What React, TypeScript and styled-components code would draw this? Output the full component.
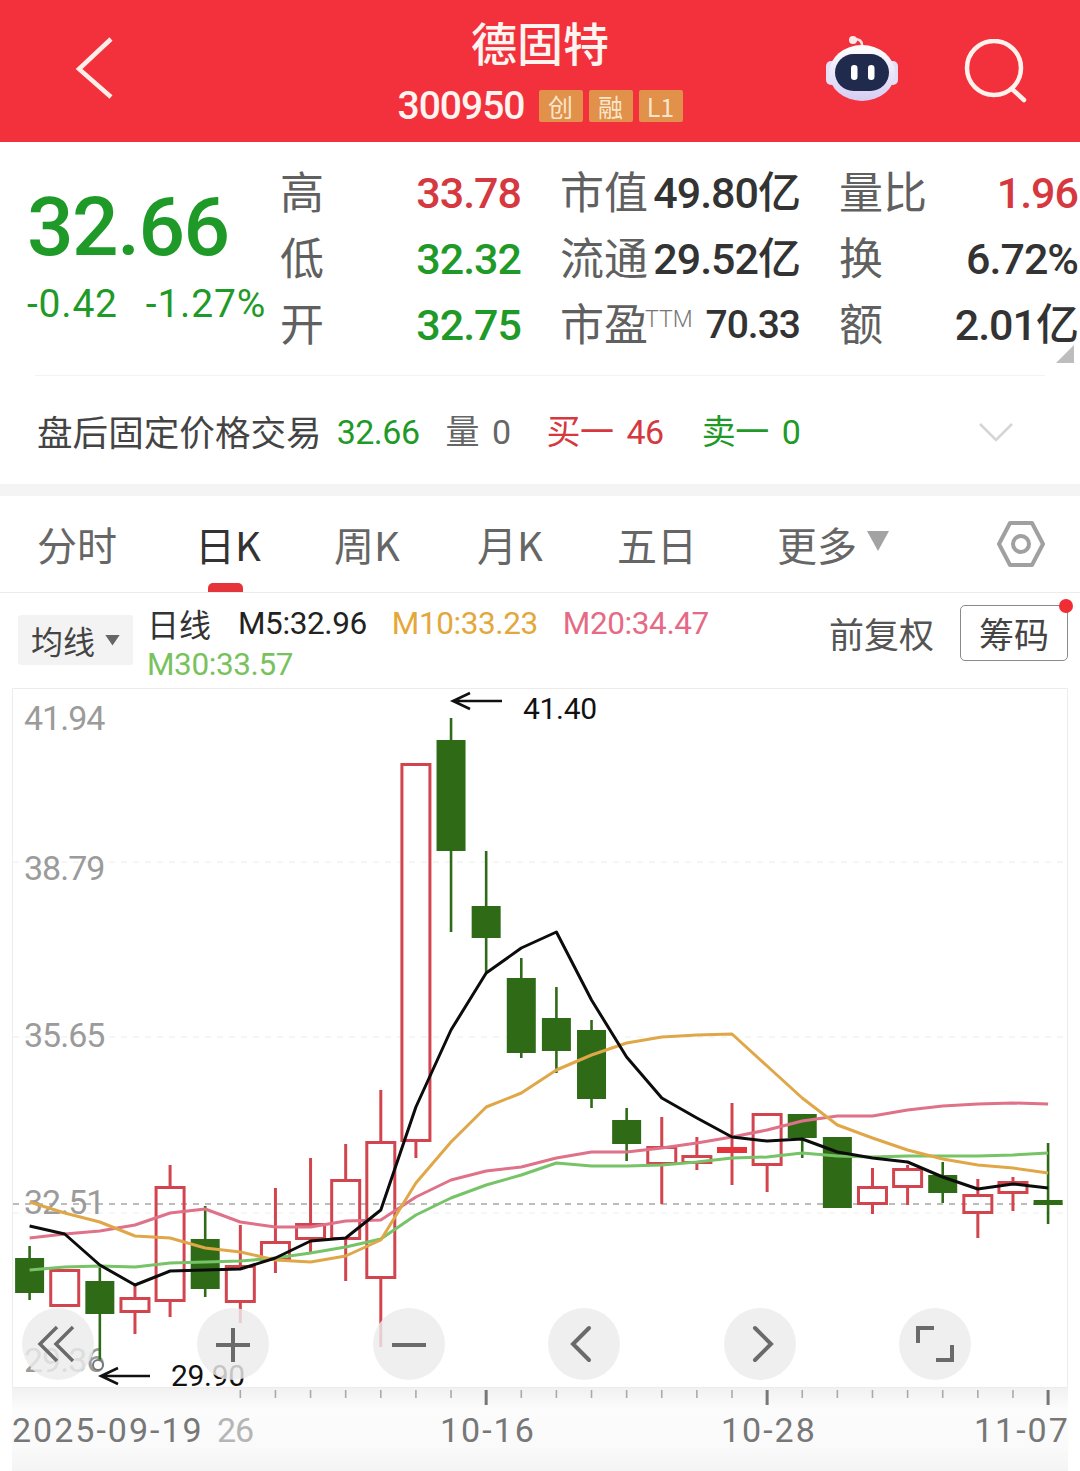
import React from "react";
import styled, { createGlobalStyle } from "styled-components";

const NUM = `Roboto, "Noto Sans CJK SC", sans-serif`;
const CJK = `"Noto Sans CJK SC", Roboto, sans-serif`;
const RED = "#d6383f";
const GREEN = "#1f9a28";

const Global = createGlobalStyle`
  html, body { margin: 0; padding: 0; background: #fff; }
  #root { width: 1080px; height: 1471px; overflow: hidden; }
`;

const Page = styled.div`
  width: 1080px;
  height: 1471px;
  display: flex;
  flex-direction: column;
  font-family: ${CJK};
  color: #333;
`;

/* ---------- header ---------- */
const Header = styled.header`
  height: 142px;
  flex: none;
  background: #f2313d;
  display: grid;
  grid-template-columns: 1fr auto 1fr;
  align-items: center;
  padding: 0 52px;
`;
const BackSlot = styled.div`
  padding: 0 0 6px 22px;
`;
const HeaderCenter = styled.div`
  display: flex;
  flex-direction: column;
  align-items: center;
  gap: 24px;
  padding-top: 0;
`;
const Title = styled.div`
  color: #fff4f0;
  font-size: 46px;
  line-height: 46px;
  font-weight: 500;
`;
const CodeRow = styled.div`
  display: flex;
  align-items: center;
  gap: 6px;
`;
const Code = styled.span`
  color: #fff4f0;
  font: 500 39px/36px ${NUM};
  letter-spacing: -1px;
  margin-right: 8px;
`;
const Badge = styled.span`
  width: 44px;
  height: 32px;
  background: #e19149;
  border-radius: 2px;
  color: #f8e6cc;
  font-size: 25px;
  line-height: 32px;
  text-align: center;
`;
const HeaderActions = styled.div`
  display: flex;
  justify-content: flex-end;
  align-items: center;
  gap: 64px;
`;
const Icon = styled.svg`
  display: block;
  flex: none;
`;

/* ---------- summary ---------- */
const Summary = styled.section`
  position: relative;
  height: 233px;
  flex: none;
  display: flex;
  padding: 18px 2px 0 27px;
  box-sizing: border-box;
`;
const PriceBlock = styled.div`
  width: 253px;
  flex: none;
  color: ${GREEN};
`;
const Price = styled.div`
  font: 500 82px/70px ${NUM};
  margin-top: 32px;
  letter-spacing: -1.5px;
`;
const ChangeRow = styled.div`
  display: flex;
  gap: 28px;
  margin-top: 22px;
  font: 400 39px/40px ${NUM};
  letter-spacing: 0.8px;
  white-space: nowrap;
`;
const StatGrid = styled.div`
  display: grid;
  grid-template-columns: 241px 240px 239px;
  column-gap: 39px;
  grid-auto-rows: 66px;
`;
const Stat = styled.div`
  display: flex;
  justify-content: space-between;
  align-items: center;
  white-space: nowrap;
`;
const StatLabel = styled.span`
  font-size: 44px;
  color: #606060;
  line-height: 60px;
  padding-bottom: 6px;
`;
const Sup = styled.span`
  font: 300 23px/1 ${NUM};
  color: #777;
  vertical-align: 14px;
  margin-left: -3px;
`;
const StatValue = styled.span<{ $c?: string; $narrow?: boolean }>`
  font: 500 ${(p) => (p.$narrow ? "39px" : "43px")}/66px ${NUM};
  letter-spacing: -1px;
  color: ${(p) => p.$c || "#333"};
`;
const Corner = styled.span`
  position: absolute;
  right: 6px;
  bottom: 12px;
  width: 18px;
  height: 18px;
  background: #bdbdbd;
  clip-path: polygon(100% 0, 100% 100%, 0 100%);
`;
const Divider = styled.div`
  height: 1px;
  flex: none;
  margin: 0 35px;
  background: #f3f3f3;
`;

/* ---------- after hours ---------- */
const After = styled.section`
  height: 108px;
  flex: none;
  display: flex;
  align-items: center;
  justify-content: space-between;
  padding: 4px 67px 0 37px;
  box-sizing: border-box;
`;
const AfterLeft = styled.div`
  display: flex;
  align-items: center;
  white-space: nowrap;
`;
const AfterName = styled.span`
  font-size: 35.6px;
  color: #444;
  margin: -4px 15px 0 0;
`;
const AfterItem = styled.span<{ $c?: string; $gap?: number }>`
  font: 400 34px/40px ${NUM};
  letter-spacing: -0.5px;
  word-spacing: 5px;
  color: ${(p) => p.$c || "#666"};
  margin-right: ${(p) => p.$gap || 0}px;
`;
const Band = styled.div`
  height: 12px;
  flex: none;
  background: #f4f4f4;
`;

/* ---------- tabs ---------- */
const Tabs = styled.nav`
  height: 97px;
  flex: none;
  box-sizing: border-box;
  border-bottom: 1px solid #ececec;
  display: grid;
  grid-template-columns: 158px 139px 143px 140px 160px 219px auto;
  align-items: center;
  padding: 0 37px 0 37px;
`;
const Tab = styled.div<{ $active?: boolean }>`
  position: relative;
  font-size: 40px;
  line-height: 92px;
  display: flex;
  align-items: center;
  color: ${(p) => (p.$active ? "#333" : "#666")};
  ${(p) =>
    p.$active &&
    `&::after{content:"";position:absolute;left:13px;bottom:-2px;width:35px;height:9px;background:#e5343a;border-radius:5px 5px 0 0;}`}
`;
const TabArrow = styled.span`
  width: 22px;
  height: 20px;
  margin: -6px 0 0 10px;
  background: #a3a3a3;
  clip-path: polygon(0 0, 100% 0, 50% 100%);
`;

/* ---------- legend ---------- */
const Legend = styled.section`
  height: 95px;
  flex: none;
  box-sizing: border-box;
  display: flex;
  align-items: flex-start;
  padding: 10px 12px 0 18px;
`;
const MaButton = styled.div`
  width: 115px;
  height: 50px;
  margin-top: 12px;
  background: #f3f3f3;
  border-radius: 3px;
  display: flex;
  align-items: center;
  justify-content: center;
  font-size: 32px;
  color: #444;
  gap: 10px;
  flex: none;
`;
const MaArrow = styled.span`
  width: 15px;
  height: 11px;
  background: #666;
  clip-path: polygon(0 0, 100% 0, 50% 100%);
`;
const LegendText = styled.div`
  width: 656px;
  margin-left: 14px;
  display: flex;
  flex-wrap: wrap;
  align-items: center;
  row-gap: 0;
  flex: none;
`;
const LegendItem = styled.span<{ $c: string; $gap?: number }>`
  font: 400 31.5px/41px ${NUM};
  letter-spacing: -0.4px;
  color: ${(p) => p.$c};
  margin-right: ${(p) => p.$gap || 0}px;
  white-space: nowrap;
`;
const LegendBreak = styled.span`
  flex-basis: 100%;
  height: 0;
`;
const LegendCn = styled.span`
  font-size: 32px;
  line-height: 41px;
  color: #333;
  margin-right: 27px;
`;
const Adjust = styled.span`
  font-size: 35px;
  color: #555;
  line-height: 58px;
  margin: 1px 0 0 26px;
  white-space: nowrap;
  flex: none;
`;
const ChipButton = styled.div`
  position: relative;
  box-sizing: border-box;
  width: 108px;
  height: 56px;
  margin: 2px 0 0 26px;
  border: 1px solid #8a8a8a;
  border-radius: 5px;
  font-size: 35px;
  line-height: 54px;
  text-align: center;
  color: #444;
  flex: none;
  &::after {
    content: "";
    position: absolute;
    top: -7px;
    right: -6px;
    width: 14px;
    height: 14px;
    border-radius: 50%;
    background: #f02c34;
  }
`;

/* ---------- chart ---------- */
const ChartFrame = styled.section`
  position: relative;
  flex: none;
  height: 700px;
  margin: 0 12px;
  box-sizing: border-box;
  border: 1px solid #ececec;
`;
const ChartSvg = styled.svg`
  display: block;
  width: 1054px;
  height: 698px;
  overflow: visible;
`;
const PriceText = styled.text`
  font: 400 34px ${NUM};
  letter-spacing: -1px;
  fill: #9b9b9b;
`;
const MarkText = styled.text`
  font: 400 30px ${NUM};
  letter-spacing: -0.3px;
  fill: #111;
`;
const Controls = styled.div`
  position: absolute;
  left: 9px;
  top: 619px;
  display: flex;
  gap: 103.4px;
`;
const Round = styled.div`
  width: 72px;
  height: 72px;
  border-radius: 50%;
  background: rgba(236, 236, 236, 0.82);
  display: flex;
  align-items: center;
  justify-content: center;
`;

/* ---------- axis ---------- */
const Axis = styled.section`
  flex: 1;
  background: linear-gradient(#f1f1f1 0, #fcfcfc 22px, #fafafa 60px, #f4f4f4 100%);
  margin: 0 12px 0 12px;
`;
const TickSvg = styled.svg`
  display: block;
  width: 1056px;
  height: 20px;
`;
const AxisLabels = styled.div`
  display: grid;
  grid-template-columns: 205px 223px 281px 253px 92px;
  padding-left: 0;
`;
const AxisLabel = styled.span<{ $faint?: boolean }>`
  font: 400 34px/44px ${NUM};
  letter-spacing: ${(p) => (p.$faint ? "-1px" : "2px")};
  white-space: nowrap;
  color: ${(p) => (p.$faint ? "#b5b5b5" : "#777")};
`;

/* ---------- data (page coordinates) ---------- */
type C = [number, number, number, number];
const candles: C[] = [
  [1246, 1258, 1293, 1300], [1269, 1269, 1307, 1307], [1267, 1281, 1314, 1360], [1285, 1297, 1313, 1334],
  [1165, 1186, 1302, 1317], [1206, 1239, 1289, 1297], [1225, 1265, 1303, 1323], [1188, 1241, 1261, 1273],
  [1158, 1223, 1240, 1252], [1144, 1179, 1240, 1281], [1090, 1141, 1279, 1347], [763, 763, 1142, 1158],
  [718, 740, 851, 932], [851, 906, 938, 973], [958, 978, 1053, 1058], [987, 1018, 1051, 1073],
  [1020, 1030, 1099, 1108], [1108, 1120, 1144, 1161], [1117, 1146, 1165, 1204], [1137, 1155, 1164, 1170],
  [1103, 1147, 1153, 1185], [1113, 1113, 1166, 1192], [1114, 1114, 1138, 1158], [1137, 1137, 1208, 1208],
  [1168, 1186, 1205, 1214], [1165, 1168, 1188, 1205], [1162, 1175, 1193, 1203], [1179, 1194, 1214, 1238],
  [1177, 1181, 1194, 1211], [1143, 1200, 1205, 1224],
];
const greens = new Set([0, 2, 5, 12, 13, 14, 15, 16, 17, 22, 23, 26, 29]);
const cx = (i: number) => 29.6 + 35.12 * i;

const m5 = [1226, 1234, 1265, 1285, 1271, 1270, 1269, 1258, 1241, 1238, 1210, 1107, 1030, 973, 948, 932, 1000, 1057, 1098, 1118, 1137, 1141, 1139, 1152, 1158, 1162, 1177, 1189, 1184, 1188];
const m10 = [1202, 1213, 1222, 1236, 1238, 1248, 1252, 1260, 1262, 1256, 1240, 1183, 1142, 1107, 1093, 1070, 1055, 1043, 1037, 1035, 1034, 1066, 1098, 1125, 1138, 1150, 1159, 1165, 1168, 1173];
const m20 = [1238, 1234, 1231, 1225, 1213, 1209, 1222, 1227, 1227, 1221, 1220, 1197, 1180, 1171, 1167, 1158, 1152, 1152, 1148, 1143, 1137, 1130, 1121, 1116, 1116, 1110, 1106, 1104, 1103, 1104];
const m30 = [1270, 1267, 1266, 1267, 1263, 1262, 1261, 1258, 1253, 1247, 1239, 1215, 1198, 1185, 1175, 1163, 1166, 1166, 1165, 1162, 1158, 1157, 1153, 1156, 1157, 1156, 1156, 1156, 1155, 1153];
const pts = (a: number[]) => a.map((y, i) => `${cx(i).toFixed(1)},${y}`).join(" ");

function Candle({ c, i }: { c: C; i: number }) {
  const [h, t, b, l] = c;
  const x = cx(i);
  const g = greens.has(i);
  const col = g ? "#2f6b17" : "#d2454e";
  return (
    <g>
      {h < t && <line x1={x} x2={x} y1={h} y2={t} stroke={col} strokeWidth={g ? 2.6 : 3} />}
      {l > b && <line x1={x} x2={x} y1={b} y2={l} stroke={col} strokeWidth={g ? 2.6 : 3} />}
      {g ? (
        <rect x={x - 14.5} y={t} width={29} height={b - t} fill={col} />
      ) : i === 20 ? (
        <rect x={x - 15} y={t} width={30} height={b - t} fill="#e3343c" />
      ) : (
        <rect x={x - 14} y={t + 1.5} width={28} height={b - t - 3} fill="none" stroke={col} strokeWidth={3} />
      )}
    </g>
  );
}

const RoundIcon = ({ children }: { children: React.ReactNode }) => (
  <Round>
    <Icon width="46" height="46" viewBox="0 0 46 46" fill="none" stroke="#6a6a6a" strokeWidth="4">
      {children}
    </Icon>
  </Round>
);

export default function App() {
  return (
    <Page>
      <Global />
      <Header>
        <BackSlot>
          <Icon width="42" height="64" viewBox="0 0 42 64" fill="none">
            <path d="M37 3 L5 33 L37 61" stroke="#fdeee8" strokeWidth="4.5" strokeLinejoin="miter" />
          </Icon>
        </BackSlot>
        <HeaderCenter>
          <Title>德固特</Title>
          <CodeRow>
            <Code>300950</Code>
            <Badge>创</Badge>
            <Badge>融</Badge>
            <Badge>L1</Badge>
          </CodeRow>
        </HeaderCenter>
        <HeaderActions>
          <Icon width="76" height="70" viewBox="0 0 76 70" fill="none">
            <defs>
              <linearGradient id="rb" x1="0" y1="0" x2="0" y2="1">
                <stop offset="0" stopColor="#ffffff" />
                <stop offset="1" stopColor="#d5cdf2" />
              </linearGradient>
            </defs>
            <path d="M38 9 C38 4 34 3 30 3" stroke="#fbe3e3" strokeWidth="2.5" />
            <circle cx="29" cy="4" r="4" fill="#fbeaea" />
            <rect x="2" y="25" width="10" height="24" rx="5" fill="#e4def7" />
            <rect x="64" y="25" width="10" height="24" rx="5" fill="#e4def7" />
            <ellipse cx="38" cy="37" rx="33" ry="28" fill="url(#rb)" />
            <rect x="11" y="18" width="54" height="37" rx="18.5" fill="#1f2a4d" />
            <rect x="27" y="29" width="6.5" height="15" rx="3.2" fill="#fff" />
            <rect x="44" y="29" width="6.5" height="15" rx="3.2" fill="#fff" />
          </Icon>
          <Icon width="64" height="64" viewBox="0 0 64 64" fill="none" stroke="#fff1ec" strokeWidth="4.5">
            <circle cx="30" cy="29" r="27" />
            <path d="M48 50 L60 61" strokeLinecap="round" />
          </Icon>
        </HeaderActions>
      </Header>

      <Summary>
        <PriceBlock>
          <Price>32.66</Price>
          <ChangeRow>
            <span>-0.42</span>
            <span>-1.27%</span>
          </ChangeRow>
        </PriceBlock>
        <StatGrid>
          <Stat><StatLabel>高</StatLabel><StatValue $c={RED}>33.78</StatValue></Stat>
          <Stat><StatLabel>市值</StatLabel><StatValue>49.80亿</StatValue></Stat>
          <Stat><StatLabel>量比</StatLabel><StatValue $c={RED}>1.96</StatValue></Stat>
          <Stat><StatLabel>低</StatLabel><StatValue $c={GREEN}>32.32</StatValue></Stat>
          <Stat><StatLabel>流通</StatLabel><StatValue>29.52亿</StatValue></Stat>
          <Stat><StatLabel>换</StatLabel><StatValue>6.72%</StatValue></Stat>
          <Stat><StatLabel>开</StatLabel><StatValue $c={GREEN}>32.75</StatValue></Stat>
          <Stat><StatLabel>市盈<Sup>TTM</Sup></StatLabel><StatValue $narrow>70.33</StatValue></Stat>
          <Stat><StatLabel>额</StatLabel><StatValue>2.01亿</StatValue></Stat>
        </StatGrid>
        <Corner />
      </Summary>
      <Divider />

      <After>
        <AfterLeft>
          <AfterName>盘后固定价格交易</AfterName>
          <AfterItem $c={GREEN} $gap={26}>32.66</AfterItem>
          <AfterItem $gap={36}>量 0</AfterItem>
          <AfterItem $c={RED} $gap={38}>买一 46</AfterItem>
          <AfterItem $c={GREEN}>卖一 0</AfterItem>
        </AfterLeft>
        <Icon width="34" height="20" viewBox="0 0 34 20" fill="none">
          <path d="M1 2 L17 18 L33 2" stroke="#d5d5d5" strokeWidth="2.5" />
        </Icon>
      </After>
      <Band />

      <Tabs>
        <Tab>分时</Tab>
        <Tab $active>日K</Tab>
        <Tab>周K</Tab>
        <Tab>月K</Tab>
        <Tab>五日</Tab>
        <Tab>更多<TabArrow /></Tab>
        <Icon width="50" height="48" viewBox="0 0 50 48" fill="none" stroke="#a0a0a0" strokeWidth="4" strokeLinejoin="round">
          <path d="M14 3 H36 L47 24 L36 45 H14 L3 24 Z" />
          <circle cx="25" cy="24" r="8" />
        </Icon>
      </Tabs>

      <Legend>
        <MaButton>均线<MaArrow /></MaButton>
        <LegendText>
          <LegendCn>日线</LegendCn>
          <LegendItem $c="#222" $gap={25}>M5:32.96</LegendItem>
          <LegendItem $c="#e4a73a" $gap={25}>M10:33.23</LegendItem>
          <LegendItem $c="#e56a85">M20:34.47</LegendItem>
          <LegendBreak />
          <LegendItem $c="#78c25e">M30:33.57</LegendItem>
        </LegendText>
        <Adjust>前复权</Adjust>
        <ChipButton>筹码</ChipButton>
      </Legend>

      <ChartFrame>
        <ChartSvg viewBox="13 689 1054 698">
          <g fill="none" strokeDasharray="6 6">
            <line x1="13" x2="1067" y1="862" y2="862" stroke="#ececec" />
            <line x1="13" x2="1067" y1="1037" y2="1037" stroke="#ececec" />
            <line x1="13" x2="1067" y1="1213" y2="1213" stroke="#eeeeee" />
            <line x1="13" x2="1067" y1="1204" y2="1204" stroke="#a8a8a8" strokeWidth="1.5" />
          </g>
          <PriceText x="24" y="730">41.94</PriceText>
          <PriceText x="24" y="880">38.79</PriceText>
          <PriceText x="24" y="1047">35.65</PriceText>
          <PriceText x="24" y="1214">32.51</PriceText>
          <PriceText x="24" y="1372">29.36</PriceText>
          {candles.map((c, i) => (
            <Candle key={i} c={c} i={i} />
          ))}
          <circle cx="98" cy="1365" r="5" fill="#fff" stroke="#777" strokeWidth="2" />
          <g fill="none" strokeWidth="3" strokeLinejoin="round">
            <polyline points={pts(m20)} stroke="#df7188" />
            <polyline points={pts(m30)} stroke="#77c368" />
            <polyline points={pts(m10)} stroke="#e0a748" />
            <polyline points={pts(m5)} stroke="#0c0c0c" />
          </g>
          <g fill="none" stroke="#111" strokeWidth="2.6">
            <path d="M453 701 H502 M470 693 L453 701 L470 709" />
            <path d="M101 1376 H150 M118 1368 L101 1376 L118 1384" />
          </g>
          <MarkText x="523" y="719">41.40</MarkText>
          <MarkText x="171" y="1386">29.90</MarkText>
        </ChartSvg>
        <Controls>
          <RoundIcon><path d="M22 6 L5 23 L22 40 M38 6 L21 23 L38 40" strokeWidth="3.5" /></RoundIcon>
          <RoundIcon><path d="M6 24 H40 M23 7 V41" /></RoundIcon>
          <RoundIcon><path d="M6 24 H40" /></RoundIcon>
          <RoundIcon><path d="M28 7 L12 23 L28 39" strokeLinecap="round" /></RoundIcon>
          <RoundIcon><path d="M18 7 L34 23 L18 39" strokeLinecap="round" /></RoundIcon>
          <RoundIcon><path d="M6 22 V7 H22 M40 24 V39 H24" /></RoundIcon>
        </Controls>
      </ChartFrame>

      <Axis>
        <TickSvg viewBox="12 1388 1056 20">
          {candles.map((_, i) => {
            if (i < 6) return null;
            const major = i === 13 || i === 21 || i === 29;
            return (
              <line
                key={i}
                x1={cx(i)}
                x2={cx(i)}
                y1="1390"
                y2={major ? 1405 : 1398}
                stroke={major ? "#777" : "#aaa"}
                strokeWidth={major ? 3 : 1.6}
              />
            );
          })}
        </TickSvg>
        <AxisLabels>
          <AxisLabel>2025-09-19</AxisLabel>
          <AxisLabel $faint>26</AxisLabel>
          <AxisLabel>10-16</AxisLabel>
          <AxisLabel>10-28</AxisLabel>
          <AxisLabel>11-07</AxisLabel>
        </AxisLabels>
      </Axis>
    </Page>
  );
}
